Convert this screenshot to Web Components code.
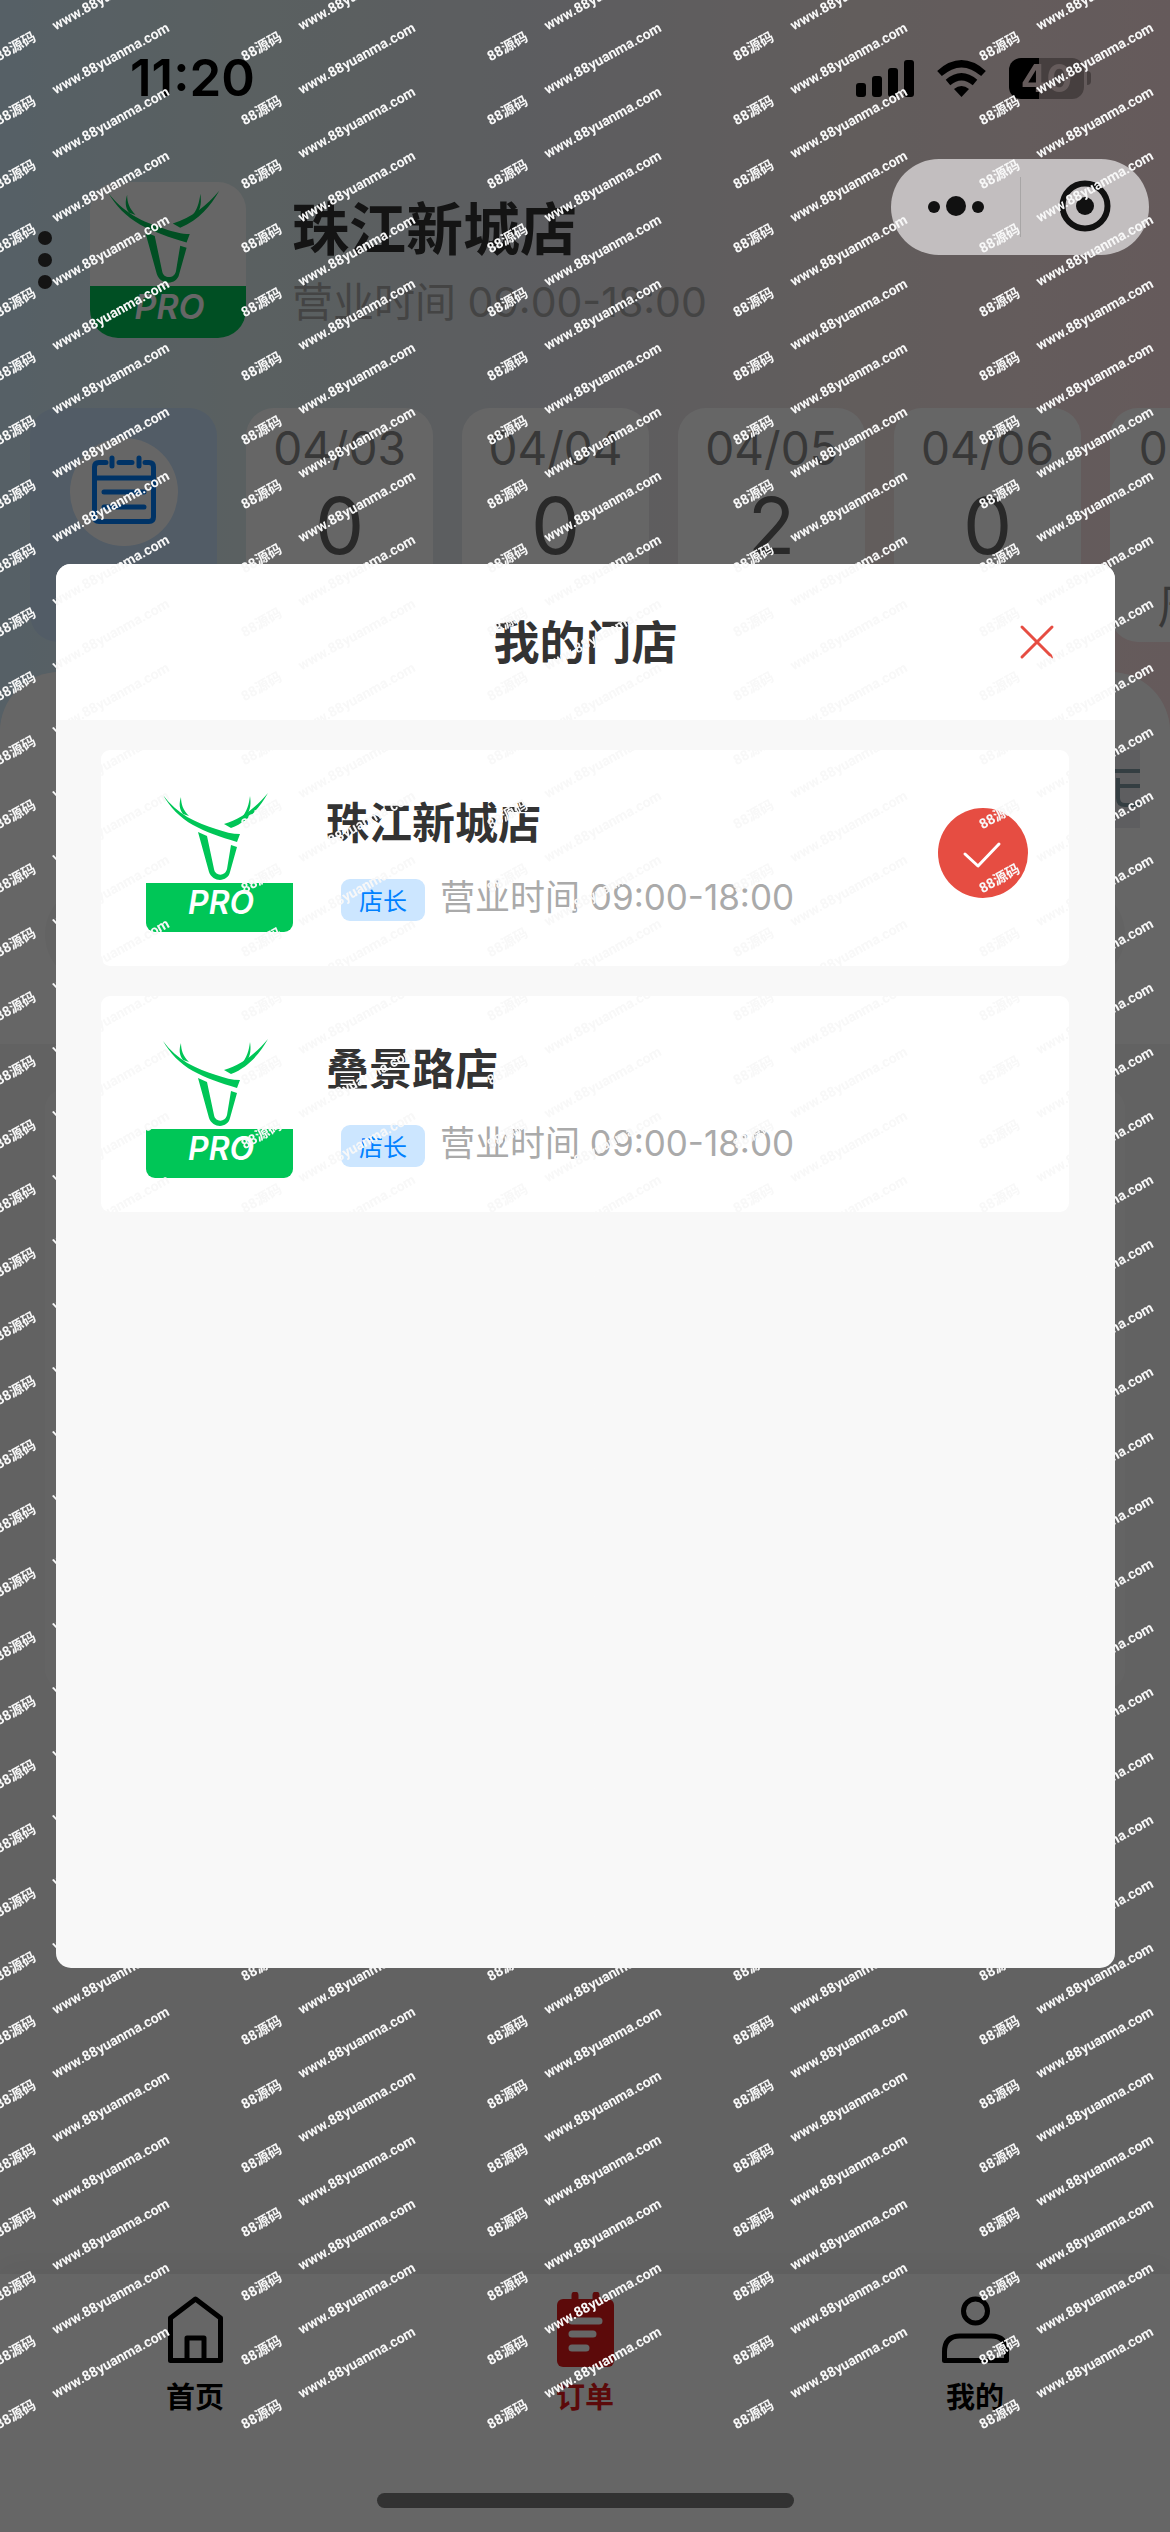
<!DOCTYPE html>
<html lang="zh-CN">
<head>
<meta charset="UTF-8">
<meta name="viewport" content="width=device-width, initial-scale=1">
<title>我的门店</title>
<style>
    :root{
        --text-color: #333;
        --muted-color: #aaa;
        --danger-color: #e64d42;
        --brand-color: #00c657;
        --info-color: #0081ff;
        --info-bg: #cce6ff;
    }

    body{
        margin: 0;
        font-family: "Inter", "Noto Sans CJK SC", sans-serif;
        color: var(--text-color);
        background: #f5f5f5;
    }
</style>
</head>
<body>
<order-page>
    <store-header name="珠江新城店" hours="营业时间 09:00-18:00"></store-header>
    <date-strip>
        <date-card date="04/03" count="0"></date-card>
        <date-card date="04/04" count="0"></date-card>
        <date-card date="04/05" count="2"></date-card>
        <date-card date="04/06" count="0"></date-card>
        <date-card date="04/07" count="0" week="周日"></date-card>
    </date-strip>
    <order-panel></order-panel>
    <tab-bar slot="footer">
        <tab-item icon="home" label="首页"></tab-item>
        <tab-item icon="order" label="订单" active></tab-item>
        <tab-item icon="user" label="我的"></tab-item>
    </tab-bar>
</order-page>

<store-dialog heading="我的门店">
    <store-card name="珠江新城店" role-name="店长" hours="营业时间 09:00-18:00" checked></store-card>
    <store-card name="叠景路店" role-name="店长" hours="营业时间 09:00-18:00"></store-card>
</store-dialog>

<status-bar time="11:20" battery="40"></status-bar>
<mini-capsule></mini-capsule>
<home-indicator></home-indicator>
<page-watermark brand="88源码" url="www.88yuanma.com"></page-watermark>

<script>
class orderPage extends HTMLElement{
    constructor(){
        super();
        this.attachShadow({ mode: "open" });
    }

    connectedCallback() {
        this.shadowRoot.innerHTML = `
        <style>
            :host{
                display: flex;
                flex-direction: column;
                min-height: 100vh;
                overflow: hidden;
            }

            main{
                flex: 1;
                min-width: 0;
                padding-top: 182px;
                background: linear-gradient(90deg, #d7f0ff 0, #e0f0f2 20%, #e8e8ef 48%, #f5e8e6 75%, #fde2e4 100%) no-repeat;
                background-size: 100% 800px;
            }
        </style>

        <main><slot></slot></main>
        <slot name="footer"></slot>
        `;
    }
}

class deerLogo extends HTMLElement{
    constructor(){
        super();
        this.attachShadow({ mode: "open" });
    }

    connectedCallback() {
        this.shadowRoot.innerHTML = `
        <style>
            :host{
                display: block;
                flex: none;
                overflow: hidden;
                background: #fff;
            }

            svg{
                display: block;
                width: 100%;
                height: 100%;
            }
        </style>

        <svg viewBox="0 0 147 147" fill="#00c657">
            <path d="M17 10C31 29 50 38 70 44C79 47 86 49 94 49L91 57C74 52 60 47 47 40C34 33 24 22 17 10Z"/>
            <path d="M35 12C35 19 37 25 43 31L37 29C33 24 33 18 35 12Z"/>
            <path d="M122 8C114 22 103 36 85 43L78 39C96 34 110 22 122 8Z"/>
            <path d="M104 11C105 18 105 24 100 32L95 33C101 27 103 19 104 11Z"/>
            <path d="M52 47L61 51L68 84C69 91 79 92 81 84L85 60L91 62L84 87C82 97 67 98 63 87Z"/>
            <path d="M0 98H147V147H0Z"/>
            <text x="42" y="129" fill="#fff" font-size="32" font-weight="600" font-style="italic" font-family="Inter, sans-serif">PRO</text>
        </svg>
        `;
    }
}

class storeHeader extends HTMLElement{
    constructor(){
        super();
        this.attachShadow({ mode: "open" });
    }

    connectedCallback() {
        const name = this.getAttribute("name");
        const hours = this.getAttribute("hours");

        this.shadowRoot.innerHTML = `
        <style>
            :host{
                display: flex;
                align-items: center;
                padding-left: 38px;
            }

            button{
                border: 0;
                padding: 0;
                margin-right: 38px;
                background: none;
            }

            button svg{
                display: block;
            }

            deer-logo{
                width: 156px;
                height: 156px;
                border-radius: 28px;
                margin-right: 46px;
            }

            .info{
                display: flex;
                flex-direction: column;
                gap: 16px;
            }

            .name{
                margin: 0;
                font-size: 57px;
                line-height: 68px;
                font-weight: 700;
            }

            .hours{
                font-size: 41px;
                line-height: 44px;
                color: var(--muted-color);
            }
        </style>

        <button type="button" aria-label="菜单">
            <svg width="14" height="58" viewBox="0 0 14 58" fill="#333">
                <circle cx="7" cy="7" r="7"/>
                <circle cx="7" cy="29" r="7"/>
                <circle cx="7" cy="51" r="7"/>
            </svg>
        </button>
        <deer-logo></deer-logo>
        <div class="info">
            <h1 class="name">${name}</h1>
            <div class="hours">${hours}</div>
        </div>
        `;
    }
}

class dateStrip extends HTMLElement{
    constructor(){
        super();
        this.attachShadow({ mode: "open" });
    }

    connectedCallback() {
        this.shadowRoot.innerHTML = `
        <style>
            :host{
                display: flex;
                gap: 29px;
                margin-top: 70px;
                padding-left: 30px;
                overflow: hidden;
            }

            .all{
                flex: none;
                width: 187px;
                display: flex;
                justify-content: center;
                align-items: flex-start;
                border: 0;
                padding: 30px 0 0;
                border-radius: 28px;
                background: var(--info-bg);
            }

            .all svg{
                display: block;
                border-radius: 50%;
                background: #fff;
            }
        </style>

        <button class="all" type="button" aria-label="全部日期">
            <svg width="108" height="108" viewBox="0 0 108 108" fill="none" stroke="#0081ff" stroke-width="5" stroke-linecap="round">
                <path d="M36 24.5H29Q24.5 24.5 24.5 29V79Q24.5 83.500 29 83.500H79Q83.500 83.500 83.500 79V29Q83.500 24.500 79 24.500H75M49 24.500H62M42 20V28M69 20V28M25 40H83M34 54H74M34 69H74"/>
            </svg>
        </button>
        <slot></slot>
        `;
    }
}

class dateCard extends HTMLElement{
    constructor(){
        super();
        this.attachShadow({ mode: "open" });
    }

    connectedCallback() {
        const date = this.getAttribute("date");
        const count = this.getAttribute("count");
        const week = this.getAttribute("week");

        this.shadowRoot.innerHTML = `
        <style>
            :host{
                display: block;
                flex: none;
                width: 187px;
            }

            button{
                width: 100%;
                height: 100%;
                min-height: 234px;
                display: flex;
                flex-direction: column;
                align-items: center;
                border: 0;
                padding: 13px 0 11px;
                border-radius: 28px;
                background: #fff;
                font-family: inherit;
                color: #8c8c8c;
            }

            .date{
                font-size: 46px;
                line-height: 54px;
            }

            .count{
                margin: 6px 0 10px;
                font-size: 78px;
                line-height: 90px;
                color: #666;
            }

            .week{
                font-size: 46px;
                line-height: 50px;
            }
        </style>

        <button type="button">
            <span class="date">${date}</span>
            <span class="count">${count}</span>
            ${week ? `<span class="week">${week}</span>` : ""}
        </button>
        `;
    }
}

class orderPanel extends HTMLElement{
    constructor(){
        super();
        this.attachShadow({ mode: "open" });
    }

    connectedCallback() {
        this.shadowRoot.innerHTML = `
        <style>
            :host{
                display: block;
                margin-top: 30px;
                border-radius: 60px 60px 0 0;
                background: #f5f5f5;
            }

            .filters{
                display: flex;
                flex-direction: column;
                gap: 57px;
                padding: 78px 45px 60px;
                border-radius: 60px 60px 0 0;
                background: #fff;
            }

            .more{
                align-self: flex-end;
                margin-right: -15px;
                border: 0;
                padding: 0;
                background: #ebebf0;
            }

            .more svg{
                display: block;
            }

            .search{
                box-sizing: border-box;
                width: 100%;
                height: 99px;
                border: 0;
                border-radius: 50px;
                background: #f7f7f7;
            }

            .list{
                margin: 45px 45px 0;
                min-height: 600px;
                border-radius: 20px;
                background: #fafafa;
            }
        </style>

        <div class="filters">
            <button class="more" type="button" aria-label="更多筛选">
                <svg width="46" height="78" viewBox="0 0 46 78" fill="none" stroke="#839ba6" stroke-width="4">
                    <path d="M8 21H46M24 28V48Q24 55 31 55H46M24 36H46"/>
                </svg>
            </button>
            <input class="search" type="search" aria-label="搜索订单">
        </div>
        <div class="list"></div>
        `;
    }
}

class tabBar extends HTMLElement{
    constructor(){
        super();
        this.attachShadow({ mode: "open" });
    }

    connectedCallback() {
        this.shadowRoot.innerHTML = `
        <style>
            :host{
                display: block;
                background: #fff;
                box-shadow: 0 -4px 30px rgba(0, 0, 0, 0.06);
            }

            nav{
                display: flex;
                padding: 18px 0 116px;
            }
        </style>

        <nav><slot></slot></nav>
        `;
    }
}

const tabIcons = {
    home: `<path d="M13.500 26L38.500 7L63.500 26V68.500H13.500ZM30 68V46H47V68" fill="none" stroke="currentColor" stroke-width="5" stroke-linejoin="round"/>`,
    order: `<rect x="10" y="7" width="57" height="68" rx="6" fill="currentColor"/>
            <path d="M28 3V12M49 3V12" stroke="currentColor" stroke-width="7" stroke-linecap="round"/>
            <path d="M25 29H52M25 42H46M25 56H39" stroke="#fff" stroke-width="7" stroke-linecap="round"/>`,
    user: `<g fill="none" stroke="currentColor" stroke-width="5" stroke-linejoin="round">
            <circle cx="38.500" cy="19" r="12"/>
            <path d="M7.500 68.500V60Q7.500 44 23 44H54Q69.500 44 69.500 60V68.500Z"/>
        </g>`
};

class tabItem extends HTMLElement{
    constructor(){
        super();
        this.attachShadow({ mode: "open" });
    }

    connectedCallback() {
        const icon = this.getAttribute("icon");
        const label = this.getAttribute("label");

        this.shadowRoot.innerHTML = `
        <style>
            :host{
                display: block;
                flex: 1;
                color: #000;
            }

            :host([active]){
                color: #e61b1b;
            }

            a{
                display: flex;
                flex-direction: column;
                align-items: center;
                gap: 12px;
                color: inherit;
                text-decoration: none;
                font-size: 29px;
                line-height: 36px;
                font-weight: 700;
            }
        </style>

        <a href="#${icon}">
            <svg width="76" height="76" viewBox="0 0 76 76">${tabIcons[icon]}</svg>
            <span>${label}</span>
        </a>
        `;
    }
}

class storeDialog extends HTMLElement{
    constructor(){
        super();
        this.attachShadow({ mode: "open" });
    }

    connectedCallback() {
        const heading = this.getAttribute("heading");

        this.shadowRoot.innerHTML = `
        <style>
            :host{
                position: fixed;
                inset: 0;
                display: flex;
                align-items: center;
                padding: 0 55px 0 56px;
                background: rgba(0, 0, 0, 0.6);
            }

            section{
                flex: 1;
                border-radius: 15px;
                overflow: hidden;
                background: #f8f8f8;
            }

            header{
                display: grid;
                grid-template-columns: 1fr auto 1fr;
                align-items: center;
                padding: 48px 60px;
                background: #fff;
            }

            h2{
                grid-column: 2;
                margin: 0;
                font-size: 46px;
                line-height: 60px;
                font-weight: 700;
            }

            header button{
                justify-self: end;
                border: 0;
                padding: 0;
                background: none;
            }

            header svg{
                display: block;
            }

            .list{
                box-sizing: border-box;
                min-height: 1248px;
                display: flex;
                flex-direction: column;
                gap: 30px;
                padding: 30px 46px 30px 45px;
            }
        </style>

        <section role="dialog" aria-modal="true" aria-label="${heading}">
            <header>
                <h2>${heading}</h2>
                <button type="button" aria-label="关闭">
                    <svg width="36" height="36" viewBox="0 0 36 36" stroke="#e64d42" stroke-width="3" stroke-linecap="round">
                        <path d="M3 3L33 33M33 3L3 33"/>
                    </svg>
                </button>
            </header>
            <div class="list"><slot></slot></div>
        </section>
        `;
    }
}

class storeCard extends HTMLElement{
    constructor(){
        super();
        this.attachShadow({ mode: "open" });
    }

    connectedCallback() {
        const name = this.getAttribute("name");
        const roleName = this.getAttribute("role-name");
        const hours = this.getAttribute("hours");
        const checked = this.hasAttribute("checked");

        this.shadowRoot.innerHTML = `
        <style>
            :host{
                display: block;
            }

            button{
                width: 100%;
                display: flex;
                align-items: center;
                border: 0;
                padding: 35px 41px 34px 45px;
                border-radius: 9px;
                background: #fff;
                font-family: inherit;
                color: inherit;
                text-align: left;
            }

            deer-logo{
                width: 147px;
                height: 147px;
                border-radius: 9px;
                margin-right: 33px;
            }

            .info{
                flex: 1;
                display: flex;
                flex-direction: column;
                gap: 30px;
            }

            .name{
                font-size: 43px;
                line-height: 52px;
                font-weight: 700;
            }

            .meta{
                display: flex;
                align-items: flex-start;
                gap: 15px;
                padding-left: 15px;
            }

            .tag{
                padding: 5px 18px 1px;
                border-radius: 9px;
                background: var(--info-bg);
                color: var(--info-color);
                font-size: 24px;
                line-height: 36px;
            }

            .hours{
                font-size: 35px;
                line-height: 36px;
                color: var(--muted-color);
            }

            .check{
                display: block;
                margin-bottom: 12px;
                border-radius: 50%;
                background: var(--danger-color);
            }
        </style>

        <button type="button" aria-pressed="${checked}">
            <deer-logo></deer-logo>
            <span class="info">
                <span class="name">${name}</span>
                <span class="meta">
                    <span class="tag">${roleName}</span>
                    <span class="hours">${hours}</span>
                </span>
            </span>
            ${checked ? `
            <svg class="check" width="90" height="90" viewBox="0 0 90 90" fill="none" stroke="#fff" stroke-width="3" stroke-linecap="round" stroke-linejoin="round">
                <path d="M27 46L40 58L61 36"/>
            </svg>` : ""}
        </button>
        `;
    }
}

class statusBar extends HTMLElement{
    constructor(){
        super();
        this.attachShadow({ mode: "open" });
    }

    connectedCallback() {
        const time = this.getAttribute("time");
        const battery = this.getAttribute("battery");

        this.shadowRoot.innerHTML = `
        <style>
            :host{
                position: fixed;
                top: 0;
                left: 0;
                right: 0;
                display: flex;
                justify-content: space-between;
                align-items: center;
                padding: 48px 79px 0 130px;
                color: #000;
            }

            .time{
                font-size: 51px;
                line-height: 60px;
                font-weight: 600;
            }

            .icons{
                display: flex;
                align-items: center;
                gap: 22px;
            }

            .battery{
                display: flex;
                align-items: center;
                gap: 3px;
            }

            .level{
                width: 75px;
                border-radius: 12px;
                background: linear-gradient(90deg, #000 ${battery}%, #463f3f ${battery}%);
                color: #655b5b;
                font-size: 38px;
                line-height: 41px;
                font-weight: 700;
                text-align: center;
            }

            .cap{
                width: 4px;
                height: 14px;
                border-radius: 0 4px 4px 0;
                background: #463f3f;
            }
        </style>

        <div class="time">${time}</div>
        <div class="icons">
            <svg width="58" height="37" viewBox="0 0 58 37">
                <rect x="0" y="23" width="10" height="14" rx="3"/>
                <rect x="16" y="16" width="10" height="21" rx="3"/>
                <rect x="32" y="8" width="10" height="29" rx="3"/>
                <rect x="48" y="0" width="10" height="37" rx="3"/>
            </svg>
            <svg width="51" height="37" viewBox="0 0 51 37">
                <path d="M25.500 37L18 29Q25.500 23 33 29Z"/>
                <path d="M12 22.500Q25.500 11 39 22.500M3.500 13.500Q25.500 -6 47.500 13.500" fill="none" stroke="#000" stroke-width="7"/>
            </svg>
            <div class="battery">
                <div class="level">${battery}</div>
                <div class="cap"></div>
            </div>
        </div>
        `;
    }
}

class miniCapsule extends HTMLElement{
    constructor(){
        super();
        this.attachShadow({ mode: "open" });
    }

    connectedCallback() {
        this.shadowRoot.innerHTML = `
        <style>
            :host{
                position: fixed;
                top: 159px;
                right: 21px;
                display: flex;
                align-items: center;
                border-radius: 48px;
                background: #c2bebf;
            }

            button{
                border: 0;
                padding: 0;
                background: none;
            }

            svg{
                display: block;
            }

            .line{
                width: 1px;
                height: 60px;
                background: #a8a6a6;
            }
        </style>

        <button type="button" aria-label="更多">
            <svg width="129" height="96" viewBox="0 0 129 96" fill="#111">
                <circle cx="43" cy="48" r="6"/>
                <circle cx="65" cy="47" r="10"/>
                <circle cx="87" cy="48" r="6"/>
            </svg>
        </button>
        <span class="line"></span>
        <button type="button" aria-label="关闭小程序">
            <svg width="128" height="96" viewBox="0 0 128 96" fill="#111">
                <circle cx="64" cy="47" r="9"/>
                <circle cx="64" cy="47" r="22.500" fill="none" stroke="#111" stroke-width="6"/>
            </svg>
        </button>
        `;
    }
}

class homeIndicator extends HTMLElement{
    constructor(){
        super();
        this.attachShadow({ mode: "open" });
    }

    connectedCallback() {
        this.shadowRoot.innerHTML = `
        <style>
            :host{
                position: fixed;
                left: 0;
                right: 0;
                bottom: 24px;
                display: flex;
                justify-content: center;
            }

            .bar{
                width: 417px;
                height: 15px;
                border-radius: 8px;
                background: #323232;
            }
        </style>

        <div class="bar"></div>
        `;
    }
}

class pageWatermark extends HTMLElement{
    constructor(){
        super();
        this.attachShadow({ mode: "open" });
    }

    connectedCallback() {
        const brand = this.getAttribute("brand");
        const url = this.getAttribute("url");
        const cols = Math.ceil(window.innerWidth / 246);
        const rows = Math.floor(window.innerHeight / 64) - 1;
        const cell = `<div class="cell"><span class="brand">${brand}</span><span class="url">${url}</span></div>`;

        this.shadowRoot.innerHTML = `
        <style>
            :host{
                position: fixed;
                inset: 0;
                overflow: hidden;
                pointer-events: none;
                color: #f8f8f8;
            }

            .grid{
                display: grid;
                grid-template-columns: repeat(${cols}, 246px);
                grid-auto-rows: 64px;
            }

            .cell{
                display: flex;
                white-space: nowrap;
                font-family: "Roboto", "Noto Sans CJK SC", sans-serif;
                font-size: 14px;
                line-height: 16px;
                font-weight: 700;
            }

            .brand,
            .url{
                transform: rotate(-29deg);
                transform-origin: left bottom;
            }

            .brand{
                align-self: flex-end;
                width: 57px;
            }

            .url{
                align-self: flex-start;
                margin-top: 17px;
            }
        </style>

        <div class="grid" aria-hidden="true">${cell.repeat(cols * rows)}</div>
        `;
    }
}

customElements.define("deer-logo", deerLogo);
customElements.define("order-page", orderPage);
customElements.define("store-header", storeHeader);
customElements.define("date-strip", dateStrip);
customElements.define("date-card", dateCard);
customElements.define("order-panel", orderPanel);
customElements.define("tab-bar", tabBar);
customElements.define("tab-item", tabItem);
customElements.define("store-dialog", storeDialog);
customElements.define("store-card", storeCard);
customElements.define("status-bar", statusBar);
customElements.define("mini-capsule", miniCapsule);
customElements.define("home-indicator", homeIndicator);
customElements.define("page-watermark", pageWatermark);
</script>
</body>
</html>
